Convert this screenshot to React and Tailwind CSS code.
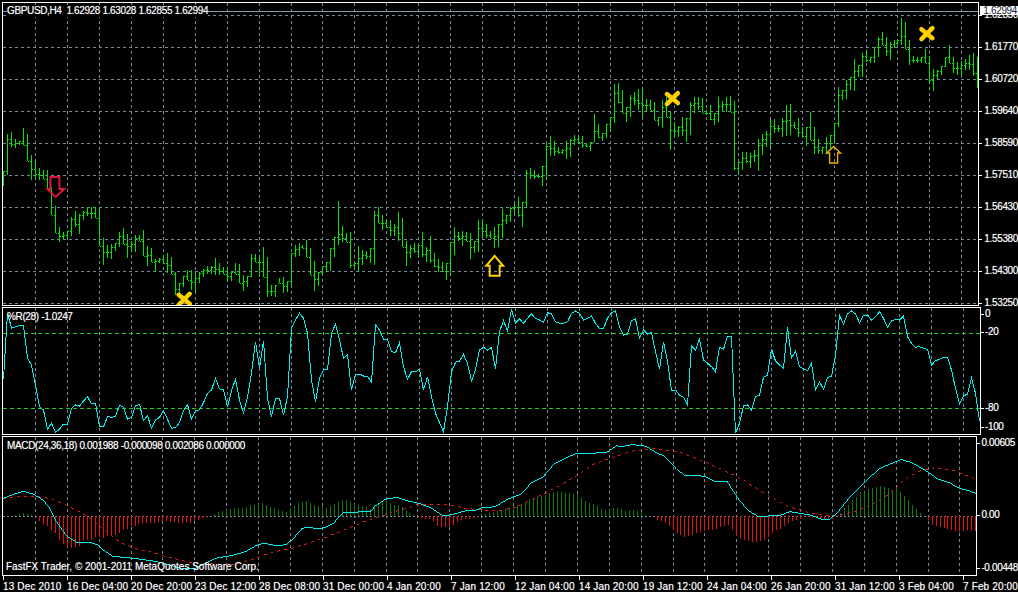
const BARS = [
513,557,402,525,396,440,418,445,422,435,385,435,402,482,465,540,478,535,504,540,510,538,510,568,560,645,617,700,682,727,697,717,692,717,652,708,632,682,642,702,632,660,622,648,622,657,622,655,622,737,715,795,735,775,732,778,728,752,695,740,685,732,702,773,722,755,706,755,706,722,690,768,737,798,743,785,778,815,775,790,765,790,760,820,770,822,815,885,850,885,828,860,810,840,810,870,815,878,815,850,808,830,798,822,798,822,775,825,788,825,802,822,800,842,815,842,790,822,793,850,825,872,828,860,762,830,762,785,770,830,742,830,772,892,855,888,855,890,835,850,832,878,842,875,760,858,735,770,728,768,735,745,720,770,745,825,782,872,815,858,798,825,785,812,745,812,712,770,603,735,
678,725,700,725,697,803,790,800,738,815,750,795,752,778,745,790,633,795,622,670,645,690,660,680,660,708,672,708,637,722,653,742,722,798,735,775,728,760,735,770,697,770,740,785,707,790,760,800,778,815,787,812,790,840,727,825,682,765,695,722,692,737,695,722,700,777,722,760,660,755,658,710,672,715,692,715,682,745,672,742,627,713,645,672,620,667,610,640,592,650,605,682,510,622,503,537,510,537,522,535,498,558,430,540,408,468,422,468,440,463,448,462,424,476,418,470,405,435,405,430,408,445,430,440,425,453,343,425,372,415,400,423,372,415,350,392,252,368,250,308,270,340,320,365,285,352,275,315,268,330,265,355,297,335,300,330,307,360,350,378,300,385,290,350,335,450,367,410,378,410,
352,408,355,425,305,405,292,340,290,330,295,340,330,345,315,360,340,375,292,365,302,335,290,335,288,335,302,510,485,525,457,510,455,490,458,505,450,485,418,512,403,465,392,440,360,445,358,398,375,395,355,412,315,408,312,405,365,385,355,412,380,412,380,438,335,420,380,462,418,462,440,462,412,462,405,450,368,430,260,382,270,300,240,298,232,270,178,272,195,232,160,232,150,185,170,188,140,188,112,170,97,135,110,168,125,180,120,145,120,135,55,135,65,148,120,195,168,190,170,190,172,190,148,190,168,248,208,272,210,238,198,225,172,202,135,188,170,218,185,225,182,225,178,210,165,210,158,228,172,263];

const WPR = [
238,38,85,80,77,77,175,195,255,320,330,388,370,397,388,372,372,325,315,318,303,290,312,310,380,380,350,352,350,316,322,357,352,318,313,362,347,385,360,352,332,358,385,383,368,332,314,358,332,330,308,280,270,235,267,268,320,272,238,300,338,290,220,125,205,122,295,350,295,295,345,290,85,60,40,55,100,240,305,235,210,208,100,72,120,
175,165,270,222,222,228,228,247,75,90,118,118,155,158,128,200,238,215,215,208,270,230,290,340,368,395,320,215,187,183,163,190,243,210,150,142,150,142,207,95,62,92,28,70,57,70,55,42,55,60,67,38,42,65,70,70,65,40,33,40,60,55,48,70,85,85,55,38,33,80,105,102,62,57,115,90,102,98,155,208,125,185,270,270,285,
292,315,138,150,118,180,190,200,215,142,148,108,108,400,370,318,315,330,290,285,232,225,147,183,195,205,82,175,153,200,207,212,190,270,245,268,232,230,165,45,72,42,33,42,68,45,45,60,50,35,55,82,63,58,60,48,110,130,142,140,145,148,195,182,178,172,172,210,265,313,288,282,235,280,362];

const HIST = [
0,0,0,5,8,10,8,5,3,-15,-22,-30,-40,-50,-70,-82,-92,-95,-93,-90,-75,-70,-70,-62,-62,-65,-60,-58,-55,-50,-40,-38,-30,-28,-22,-20,-20,-20,-20,-18,-15,-15,-18,-18,-20,-20,-18,-20,-15,-10,-6,-3,0,8,12,17,20,22,25,25,25,28,35,35,37,40,35,28,25,20,15,13,25,30,40,43,47,42,35,30,30,25,30,37,45,
50,50,45,38,35,33,28,22,35,40,45,47,42,35,35,28,17,10,5,2,-4,-8,-8,-15,-28,-32,-33,-30,-25,-18,-10,-8,-8,-6,-2,10,8,10,12,17,20,22,27,30,35,37,45,52,57,60,62,65,70,75,78,75,72,70,68,68,55,48,42,38,30,22,20,20,25,25,22,17,20,20,15,12,5,2,-3,-12,-15,-20,-30,-42,-50,
-55,-62,-58,-55,-50,-48,-45,-42,-40,-38,-32,-28,-25,-40,-58,-65,-70,-75,-78,-78,-75,-72,-62,-50,-42,-38,-28,-20,-15,-10,-8,-2,-2,-4,-4,-8,-10,-12,-8,2,10,25,35,50,60,75,75,82,85,90,92,88,85,80,85,75,62,50,35,22,10,2,-12,-25,-30,-33,-35,-38,-42,-45,-48,-45,-42,-40,-45];

const seg = (off, list) => list.map(([x, y]) => [(x + off) / 3, 300 + y / 3]);
const MACD = [
...seg(0, [[10,595],[40,583],[70,574],[100,582],[130,600],[150,625],[170,665],[200,708],[230,727],[270,727],[295,735],[310,750],[340,770],[380,773],[420,778],[470,785],[510,795],[540,805],[590,805],[620,790],[650,775],[700,767],[740,755],[770,738],[795,730],[830,737],[860,735],[880,720],[910,685],[935,682],[950,686],[975,684],[1005,670]]),
...seg(1020, [[0,650],[15,638],[60,636],[95,635],[110,618],[140,598],[175,592],[205,602],[240,610],[275,622],[315,648],[345,643],[380,633],[405,633],[430,624],[470,620],[510,597],[550,582],[580,548],[615,530],[650,490],[680,475],[715,460],[790,458],[810,455],[835,437],[860,438],[885,433],[925,438],[960,460],[980,467]]),
...seg(2034, [[4,508],[30,527],[60,525],[90,530],[115,543],[155,544],[190,598],[220,632],[250,650],[280,648],[315,646],[345,635],[375,640],[405,645],[440,658],[465,658],[490,635],[530,585],[570,545],[615,505],[650,490],[680,478],[710,487],[760,515],[790,537],[825,548],[855,565],[885,572],[904,580]]),
];
const SIGNAL = [
...seg(0, [[10,597],[50,590],[100,588],[150,595],[200,615],[240,635],[280,660],[320,695],[360,725],[400,745],[450,755],[500,770],[540,780],[580,790],[640,792],[700,795],[770,775],[820,757],[880,745],[930,730],[980,712]]),
...seg(1020, [[0,697],[40,680],[90,660],[130,648],[180,632],[240,613],[330,613],[380,625],[430,630],[480,633],[540,620],[600,590],[660,560],[720,525],[770,490],[830,470],[880,453],[950,445]]),
...seg(2034, [[10,455],[90,485],[180,527],[260,575],[340,620],[410,640],[470,648],[520,640],[580,620],[640,585],[700,530],[740,510],[790,505],[840,512],[900,535]]),
];

const px = (v) => Math.round(v) + 0.5;
const barX = (k) => 3 + 4 * k;
const toPoints = (list) => list.map(([x, y]) => `${x.toFixed(1)},${y.toFixed(1)}`).join(' ');

function barPath() {
  let d = '';
  let prevClose = null;
  const n = BARS.length / 2;
  for (let k = 0; k < n; k++) {
    const hi = BARS[2 * k] / 3;
    const lo = BARS[2 * k + 1] / 3;
    const nextMid = k + 1 < n ? (BARS[2 * k + 2] + BARS[2 * k + 3]) / 6 : (hi + lo) / 2;
    const close = Math.min(lo, Math.max(hi, nextMid));
    const open = prevClose === null ? (hi + lo) / 2 : Math.min(lo, Math.max(hi, prevClose));
    const x = barX(k) + 0.5;
    d += `M${x} ${Math.round(hi)}V${Math.round(lo)}M${x - 1.5} ${px(open)}H${x - 0.5}M${x + 0.5} ${px(close)}H${x + 1.5}`;
    prevClose = close;
  }
  return d;
}

const wprPoints = () => {
  const pts = WPR.map((y, k) => [barX(k) + 0.5, 300 + y / 3]);
  pts.splice(183, 0, [734, 300 + 290 / 3]);
  return pts;
};

const GRID_X = Array.from({ length: 30 }, (_, i) => 35 + 32 * i);
const GRID_Y = [15, 47, 79, 111, 143, 175, 207, 239, 271, 303];

function VGrid({ y1, y2 }) {
  return GRID_X.map((x) => (
    <line key={x} x1={x + 0.5} x2={x + 0.5} y1={y1} y2={y2} stroke="#778899" strokeDasharray="3 3" />
  ));
}

function Cross({ x, y }) {
  return (
    <g stroke="#ffd000" strokeWidth="4.5" strokeLinecap="round" shapeRendering="auto">
      <line x1={x - 5} y1={y - 4} x2={x + 6} y2={y + 5} />
      <line x1={x - 5} y1={y + 6} x2={x + 6} y2={y - 5} />
    </g>
  );
}

const PRICES = ['1.62830', '1.61770', '1.60720', '1.59640', '1.58590', '1.57510', '1.56430', '1.55380', '1.54300', '1.53250'];
const TIMES = ['13 Dec 2010', '16 Dec 04:00', '20 Dec 20:00', '23 Dec 12:00', '28 Dec 08:00', '31 Dec 00:00', '4 Jan 20:00', '7 Jan 12:00', '12 Jan 04:00', '14 Jan 20:00', '19 Jan 12:00', '24 Jan 04:00', '26 Jan 20:00', '31 Jan 12:00', '3 Feb 04:00', '7 Feb 20:00'];

function AxisLabel({ text, className = '' }) {
  return (
    <div className={`flex items-center h-[12px] ${className}`}>
      <span className="w-[3px] h-px bg-white shrink-0" />
      <span className="ml-[1px] whitespace-nowrap">{text}</span>
    </div>
  );
}

export default function App() {
  return (
    <div className="w-[1018px] h-[592px] overflow-hidden bg-black text-white pt-[2px] pl-[2px] flex flex-col gap-px font-['Liberation_Sans',sans-serif] text-[10px] leading-[12px] tracking-[-0.36px] [text-shadow:0_0_1px_rgba(255,255,255,0.55)]">
      <div className="flex h-[304px] shrink-0">
        <div className="relative w-[979px] border border-white">
          <svg viewBox="3 3 977 302" className="block w-full h-full" shapeRendering="crispEdges" fill="none">
            {GRID_Y.map((y) => (
              <line key={y} x1="3" x2="980" y1={y + 0.5} y2={y + 0.5} stroke="#778899" strokeDasharray="3 3" />
            ))}
            <VGrid y1={3} y2={305} />
            <line x1="3" x2="980" y1="11.5" y2="11.5" stroke="#8a95a5" />
            <path d={barPath()} stroke="#00e600" />
            <g shapeRendering="auto" strokeWidth="2" strokeLinejoin="miter">
              <polygon points="50.5,177 59.5,177 59.5,189 64.5,189 55.5,197 47.5,189 50.5,189" stroke="#dc143c" />
              <polygon points="495.5,256 504,266 500.5,266 500.5,276 490.5,276 490.5,266 487,266" stroke="#ffd000" />
              <polygon points="835,146.5 842,153 839,153 839,163 831,163 831,153 828,153" stroke="#f0b000" strokeWidth="1.4" />
            </g>
            <Cross x={184} y={299} />
            <Cross x={673} y={98} />
            <Cross x={928} y={33} />
          </svg>
          <div className="absolute left-[4px] top-[2px] bg-black whitespace-pre">GBPUSD,H4  1.62928 1.63028 1.62855 1.62994</div>
        </div>
        <div className="relative flex-1">
          <div className="-mt-[3px]">
            {PRICES.map((p) => (
              <div key={p} className="flex items-center h-[32px]">
                <span className="w-[3px] h-px bg-white shrink-0" />
                <span className="ml-[2px] whitespace-nowrap">{p}</span>
              </div>
            ))}
          </div>
          <div className="absolute left-[1px] right-0 top-[4px] h-[9px] bg-white text-[#1a1a30] pl-[3px] leading-[9px] whitespace-nowrap overflow-hidden [text-shadow:none]">1.62994</div>
        </div>
      </div>

      <div className="flex h-[128px] shrink-0">
        <div className="relative w-[979px] border border-white">
          <svg viewBox="3 308 977 126" className="block w-full h-full" fill="none" shapeRendering="crispEdges">
            <VGrid y1={308} y2={434} />
            <line x1="3" x2="980" y1="333.5" y2="333.5" stroke="#22cc22" strokeDasharray="4 3" />
            <line x1="3" x2="980" y1="408.5" y2="408.5" stroke="#22cc22" strokeDasharray="4 3" />
            <polyline points={toPoints(wprPoints())} stroke="#00f0f0" />
          </svg>
          <div className="absolute left-[4px] top-[3px] whitespace-nowrap">%R(28) -1.0247</div>
        </div>
        <div className="flex-1">
          <AxisLabel text="0" className="mt-px" />
          <AxisLabel text="-20" className="mt-[6px]" />
          <AxisLabel text="-80" className="mt-[64px]" />
          <AxisLabel text="-100" className="mt-[7px]" />
        </div>
      </div>

      <div className="flex h-[140px] shrink-0">
        <div className="relative w-[979px] border border-white">
          <svg viewBox="3 437 977 138" className="block w-full h-full" fill="none" shapeRendering="crispEdges">
            <VGrid y1={437} y2={575} />
            <line x1="3" x2="980" y1="516.5" y2="516.5" stroke="#778899" strokeDasharray="2 2" />
            {HIST.map((h, k) =>
              h === 0 ? null : (
                <line
                  key={k}
                  x1={barX(k) + 0.5}
                  x2={barX(k) + 0.5}
                  y1={516.5}
                  y2={516.5 - h / 3}
                  stroke={h > 0 ? '#127a0c' : '#e81010'}
                />
              )
            )}
            <polyline points={toPoints(SIGNAL)} stroke="#e81818" strokeDasharray="3 4" />
            <polyline points={toPoints(MACD)} stroke="#00f0f0" />
          </svg>
          <div className="absolute left-[4px] top-[3px] whitespace-nowrap">MACD(24,36,18) 0.001988 -0.000098 0.002086 0.000000</div>
          <div className="absolute left-[3px] bottom-[2px] whitespace-nowrap tracking-normal">FastFX Trader, © 2001-2011 MetaQuotes Software Corp.</div>
        </div>
        <div className="flex-1">
          <AxisLabel text="0.00605" className="mt-px" />
          <AxisLabel text="0.00" className="mt-[60px]" />
          <AxisLabel text="-0.00448" className="mt-[41px]" />
        </div>
      </div>

      <div className="flex pl-px -mt-px tracking-[0.15px]">
        {TIMES.map((t) => (
          <div key={t} className="w-[64px] shrink-0">
            <div className="w-px h-[4px] bg-white" />
            <div className="whitespace-nowrap mt-[-1px] pt-[2px]">{t}</div>
          </div>
        ))}
      </div>
    </div>
  );
}
